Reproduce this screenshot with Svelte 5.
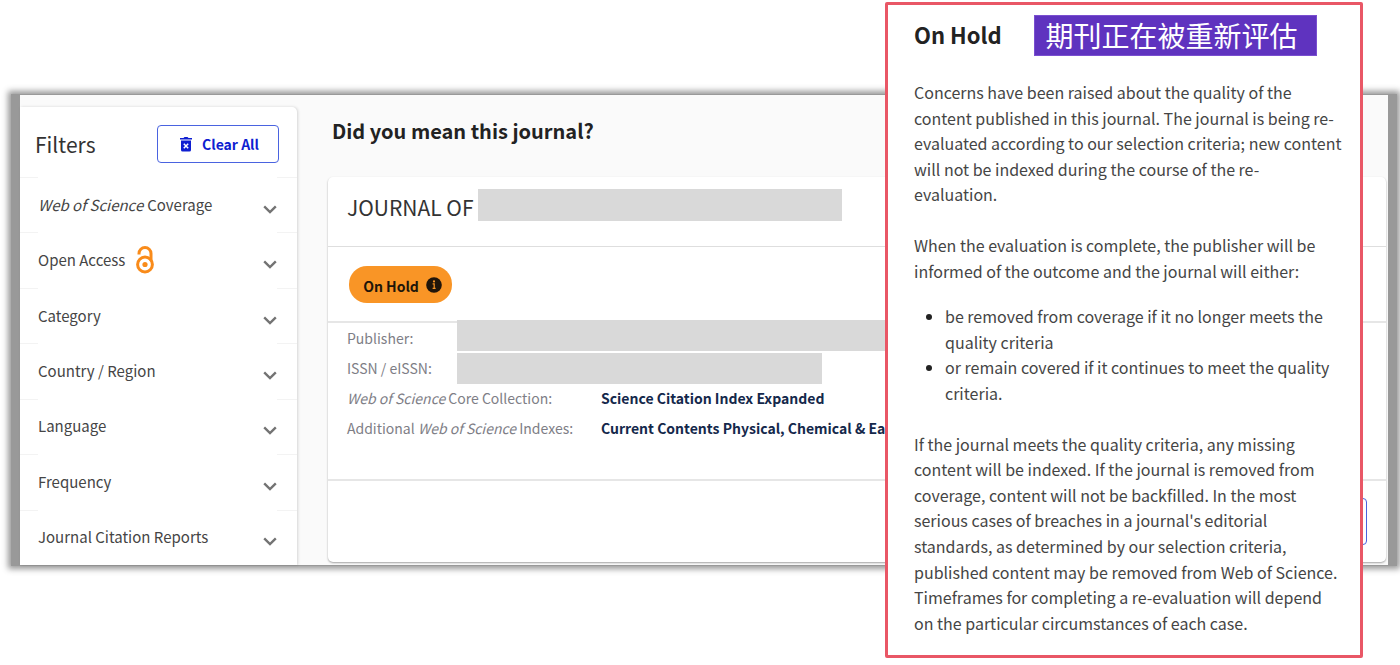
<script>
  const filters = [
    { em: "Web of Science", label: "Coverage" },
    { label: "Open Access", openAccess: true },
    { label: "Category" },
    { label: "Country / Region" },
    { label: "Language" },
    { label: "Frequency" },
    { label: "Journal Citation Reports" },
  ];
</script>

<div class="page">
  <div class="window">
    <aside class="filters">
      <header class="filters-head">
        <h2>Filters</h2>
        <button class="clear">
          <svg width="12" height="15" viewBox="0 0 12 15" aria-hidden="true">
            <path
              d="M0 1h3.5l1-1h3l1 1H12v1.6H0zM1 3.4h10V13a1.6 1.6 0 0 1-1.6 1.6H2.6A1.6 1.6 0 0 1 1 13z"
              fill="#0f1fd1"
            />
            <path d="M3.8 6.8l4.4 4.4M8.2 6.8l-4.4 4.4" stroke="#fff" stroke-width="1.5" />
          </svg>
          Clear All
        </button>
      </header>
      <ul class="filter-list">
        {#each filters as filter}
          <li>
            <button class="filter">
              <span class="filter-label">
                {#if filter.em}<em>{filter.em}</em>{/if}
                {filter.label}
                {#if filter.openAccess}
                  <svg width="20" height="28" viewBox="0 0 20 28" fill="none" stroke="#f98b1a" aria-hidden="true">
                    <circle cx="10" cy="18.5" r="7.4" stroke-width="3" />
                    <circle cx="10" cy="18.5" r="2.6" fill="#f98b1a" stroke="none" />
                    <path d="M4 8.5V7.4a6 5.9 0 0 1 12 0V15" stroke-width="3" />
                  </svg>
                {/if}
              </span>
              <svg class="chevron" width="14" height="9" viewBox="0 0 14 9" aria-hidden="true">
                <path d="M1.2 1.4L7 7l5.8-5.6" fill="none" stroke="#737373" stroke-width="2.4" />
              </svg>
            </button>
          </li>
        {/each}
      </ul>
    </aside>

    <main class="results">
      <h1>Did you mean this journal?</h1>
      <article class="card">
        <div class="card-title">
          <h2>JOURNAL OF</h2>
          <span class="mask title-mask"></span>
        </div>
        <div class="card-status">
          <button class="pill">
            <span>On Hold</span>
            <svg width="16" height="16" viewBox="0 0 16 16" aria-hidden="true">
              <circle cx="8" cy="8" r="7.8" fill="#20150a" />
              <path d="M6.6 6.9h1.6v4.6M6.6 11.4h3" fill="none" stroke="#f99526" stroke-width="1.2" />
              <circle cx="8" cy="4.4" r="1.1" fill="#f99526" />
            </svg>
          </button>
        </div>
        <div class="card-details">
          <dl>
            <dt>Publisher:</dt>
            <dd></dd>
            <dt>ISSN / eISSN:</dt>
            <dd></dd>
            <dt><em>Web of Science</em> Core Collection:</dt>
            <dd>Science Citation Index Expanded</dd>
            <dt>Additional <em>Web of Science</em> Indexes:</dt>
            <dd>Current Contents Physical, Chemical &amp; Ea</dd>
          </dl>
          <div class="masks">
            <span class="mask publisher-mask"></span>
            <span class="mask issn-mask"></span>
          </div>
        </div>
        <footer class="card-foot">
          <button class="view" aria-label="View journal"></button>
        </footer>
      </article>
    </main>
  </div>

  <section class="notice">
    <header class="notice-head">
      <h2>On Hold</h2>
      <span class="tag" lang="zh">期刊正在被重新评估</span>
    </header>
    <p>
      Concerns have been raised about the quality of the content published in this journal. The
      journal is being re-evaluated according to our selection criteria; new content will not be
      indexed during the course of the re-evaluation.
    </p>
    <p>
      When the evaluation is complete, the publisher will be informed of the outcome and the journal
      will either:
    </p>
    <ul>
      <li>be removed from coverage if it no longer meets the quality criteria</li>
      <li>or remain covered if it continues to meet the quality criteria.</li>
    </ul>
    <p>
      If the journal meets the quality criteria, any missing content will be indexed. If the journal
      is removed from coverage, content will not be backfilled. In the most serious cases of
      breaches in a journal's editorial standards, as determined by our selection criteria,
      published content may be removed from Web of Science. Timeframes for completing a
      re-evaluation will depend on the particular circumstances of each case.
    </p>
  </section>
</div>

<style>
  :global(body) {
    background: #fff;
  }

  .page {
    position: relative;
    isolation: isolate;
    overflow: hidden;
    min-height: 100vh;
    font-family: "Noto Sans CJK SC", "Source Sans Pro", sans-serif;
    font-size: 15px;
    color: #454545;
  }

  .page * {
    box-sizing: border-box;
  }

  h1,
  h2,
  p,
  ul,
  dl,
  dd {
    margin: 0;
    padding: 0;
  }

  button {
    font: inherit;
    color: inherit;
    cursor: pointer;
  }

  .window {
    position: relative;
    display: flex;
    margin: 95px 12px 0 20px;
    background: #fafafa;
  }

  /* grey frame, thicker on the left and right */
  .window::before {
    content: "";
    position: absolute;
    inset: -1px -9px;
    z-index: -1;
    background: #999;
    box-shadow: 0 0 6px 3px #999;
  }

  .filters {
    flex: none;
    display: flex;
    flex-direction: column;
    width: 277px;
    margin-top: 12px;
    background: #fff;
    border-radius: 0 5px 0 0;
    box-shadow: 1px 0 3px rgba(0, 0, 0, 0.15);
  }

  .filters-head {
    display: flex;
    align-items: center;
    justify-content: space-between;
    height: 70px;
    padding: 4px 18px 0 15px;
  }

  .filters-head h2 {
    font-size: 21px;
    line-height: 28px;
    font-weight: 400;
    color: #333;
  }

  .clear {
    display: flex;
    align-items: center;
    justify-content: center;
    gap: 10px;
    width: 122px;
    height: 38px;
    padding: 0 0 0 3px;
    background: #fff;
    border: 1px solid #4a63e0;
    border-radius: 4px;
    font-size: 14px;
    font-weight: 600;
    color: #0f1fd1;
  }

  .filter-list {
    flex: 1;
    display: grid;
    grid-auto-rows: 1fr;
    list-style: none;
  }

  .filter-list li {
    display: flex;
    padding: 0 20px 0 18px;
    border-top: 1px solid #f3f3f3;
  }

  .filter {
    flex: 1;
    display: flex;
    align-items: center;
    justify-content: space-between;
    margin-top: -1px;
    padding: 0;
    background: #fff;
    border: none;
  }

  .filter-label {
    display: flex;
    align-items: center;
    gap: 4px;
    line-height: 24px;
  }

  .filter-label svg {
    margin-left: 6px;
  }

  .chevron {
    margin-top: 9px;
  }

  .results {
    flex: 1;
    min-width: 0;
    padding: 22px 2px 3px 31px;
  }

  h1 {
    padding-left: 4px;
    font-size: 20px;
    line-height: 28px;
    font-weight: 600;
    color: #222;
  }

  .card {
    margin-top: 32px;
    background: #fff;
    border-radius: 5px;
    box-shadow: 0 1px 2px rgba(0, 0, 0, 0.35);
  }

  .card-title {
    display: flex;
    align-items: flex-start;
    gap: 4px;
    height: 70px;
    padding: 12px 19px;
    border-bottom: 1px solid #dedede;
  }

  .card-title h2 {
    font-size: 21px;
    line-height: 36px;
    font-weight: 400;
    color: #333;
  }

  .mask {
    background: #d9d9d9;
  }

  .title-mask {
    width: 364px;
    height: 32px;
  }

  .card-status {
    height: 76px;
    padding: 19px 21px;
    border-bottom: 2px solid #e6e6e6;
  }

  .pill {
    display: flex;
    align-items: center;
    justify-content: center;
    gap: 7px;
    width: 103px;
    height: 37px;
    padding: 0 0 0 4px;
    background: #f99526;
    border: none;
    border-radius: 18px;
    font-size: 14px;
    font-weight: 600;
    color: #20150a;
  }

  .pill span {
    padding-top: 3px;
  }

  .card-details {
    position: relative;
    height: 158px;
    border-bottom: 2px solid #e6e6e6;
  }

  dl {
    display: grid;
    grid-template-columns: 254px 1fr;
    grid-auto-rows: 30px;
    padding-left: 19px;
    font-size: 14px;
    line-height: 30px;
    white-space: nowrap;
  }

  dt {
    color: #7e7e86;
  }

  dd {
    font-weight: 600;
    color: #14284b;
  }

  .masks {
    position: absolute;
    top: -3px;
    left: 129px;
    display: flex;
    flex-direction: column;
    gap: 2px;
    background: #fff;
  }

  .publisher-mask {
    width: 480px;
    height: 31px;
  }

  .issn-mask {
    width: 365px;
    height: 31px;
  }

  .card-foot {
    display: flex;
    justify-content: flex-end;
    padding: 17px 19px;
  }

  .view {
    width: 140px;
    height: 47px;
    background: #fff;
    border: 1px solid #4a63e0;
    border-radius: 4px;
  }

  .notice {
    position: absolute;
    top: 2px;
    right: 37px;
    width: 478px;
    padding: 11px 18px 19px 26px;
    background: #fff;
    border: 3px solid #e95766;
    border-radius: 2px;
    font-size: 16px;
    line-height: 1.6;
  }

  .notice-head {
    display: flex;
    align-items: center;
    gap: 32px;
    height: 39px;
  }

  .notice-head h2 {
    padding-bottom: 4px;
    font-size: 22px;
    line-height: 32px;
    font-weight: 600;
    color: #222;
  }

  .tag {
    padding: 0 18px 0 11px;
    background: #5f33bf;
    border: 1px solid #7a4fd0;
    font-size: 28px;
    line-height: 39px;
    white-space: nowrap;
    color: #fff;
  }

  .notice p {
    margin-top: 25px;
  }

  .notice ul {
    margin-top: 20px;
    padding-left: 31px;
  }

  .notice li::marker {
    color: #222;
  }
</style>
